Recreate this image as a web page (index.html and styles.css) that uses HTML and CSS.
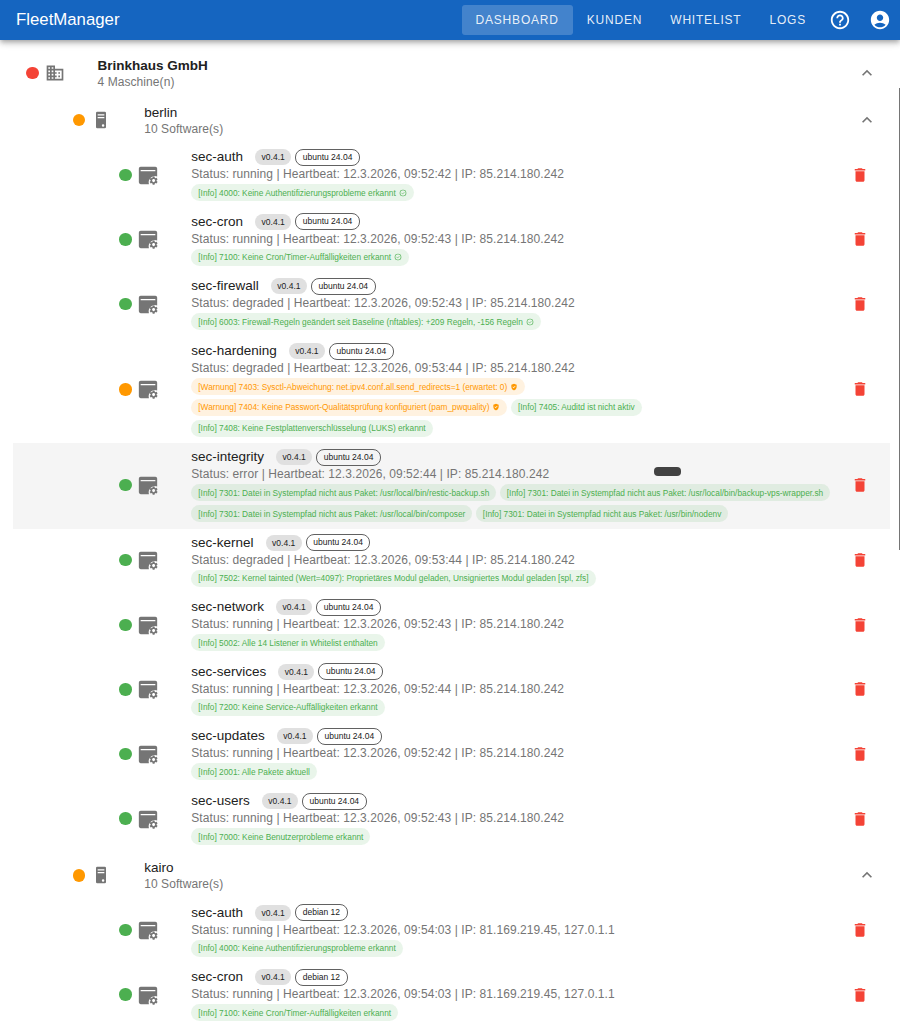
FILE: index.html
```html
<!DOCTYPE html>
<html lang="de">
<head>
  <meta charset="UTF-8" />
  <meta name="viewport" content="width=device-width, initial-scale=1" />
  <title>FleetManager</title>
  <link rel="stylesheet" href="styles.css">
</head>
<body>

  <svg class="icon-defs" aria-hidden="true">
    <symbol id="i-business" viewBox="0 0 24 24"><path d="M12 7V3H2v18h20V7H10zM6 19H4v-2h2v2zm0-4H4v-2h2v2zm0-4H4V9h2v2zm0-4H4V5h2v2zm4 12H8v-2h2v2zm0-4H8v-2h2v2zm0-4H8V9h2v2zm0-4H8V5h2v2zm10 12h-8v-2h2v-2h-2v-2h2v-2h-2V9h8v10zm-2-8h-2v2h2v-2zm0 4h-2v2h2v-2z"/></symbol>
    <symbol id="i-machine" viewBox="0 0 24 24"><path fill-rule="evenodd" d="M7.500 2h9A1.500 1.500 0 0 1 18 3.500v17a1.500 1.500 0 0 1-1.500 1.500h-9A1.500 1.500 0 0 1 6 20.500v-17A1.500 1.500 0 0 1 7.500 2zM8 5v1.500h8V5zm0 3.500V10h8V8.500zM14.500 17a1.500 1.500 0 1 0 0 3 1.500 1.500 0 0 0 0-3z"/></symbol>
    <symbol id="i-software" viewBox="0 0 24 24"><path fill-rule="evenodd" d="M4 3h16a2 2 0 0 1 2 2v8.500a7 7 0 0 0-9 8.500H4a2 2 0 0 1-2-2V5a2 2 0 0 1 2-2zm0 3.500V8h16V6.500z"/><path transform="translate(12.600 12.600) scale(.46)" d="M19.140 12.940c.04-.3.06-.61.06-.94 0-.32-.02-.64-.07-.94l2.030-1.580c.18-.14.23-.41.12-.61l-1.920-3.320c-.12-.22-.37-.29-.59-.22l-2.390.96c-.5-.38-1.030-.7-1.620-.94l-.36-2.540c-.04-.24-.24-.41-.48-.41h-3.840c-.24 0-.43.17-.47.41l-.36 2.540c-.59.24-1.130.57-1.620.94l-2.390-.96c-.22-.08-.47 0-.59.22L2.740 8.870c-.12.21-.08.47.12.61l2.030 1.580c-.05.3-.09.63-.09.94s.02.64.07.94l-2.030 1.580c-.18.14-.23.41-.12.61l1.920 3.320c.12.22.37.29.59.22l2.390-.96c.5.38 1.030.7 1.620.94l.36 2.540c.05.24.24.41.48.41h3.840c.24 0 .44-.17.47-.41l.36-2.540c.59-.24 1.130-.56 1.620-.94l2.390.96c.22.08.47 0 .59-.22l1.920-3.320c.12-.22.07-.47-.12-.61l-2.010-1.580zM12 15.600c-1.980 0-3.600-1.620-3.600-3.600s1.620-3.600 3.600-3.600 3.600 1.620 3.600 3.600-1.620 3.600-3.600 3.600z"/></symbol>
    <symbol id="i-delete" viewBox="0 0 24 24"><path d="M6 19c0 1.100.9 2 2 2h8c1.100 0 2-.9 2-2V7H6v12zM19 4h-3.500l-1-1h-5l-1 1H5v2h14V4z"/></symbol>
    <symbol id="i-less" viewBox="0 0 24 24"><path d="M12 8l-6 6 1.410 1.410L12 10.830l4.590 4.580L18 14z"/></symbol>
    <symbol id="i-help" viewBox="0 0 24 24"><path d="M11 18h2v-2h-2v2zm1-16C6.480 2 2 6.480 2 12s4.480 10 10 10 10-4.480 10-10S17.520 2 12 2zm0 18c-4.410 0-8-3.590-8-8s3.590-8 8-8 8 3.590 8 8-3.590 8-8 8zm0-14c-2.210 0-4 1.790-4 4h2c0-1.100.9-2 2-2s2 .9 2 2c0 2-3 1.750-3 5h2c0-2.250 3-2.500 3-5 0-2.210-1.790-4-4-4z"/></symbol>
    <symbol id="i-account" viewBox="0 0 24 24"><path d="M12 2C6.480 2 2 6.480 2 12s4.480 10 10 10 10-4.480 10-10S17.520 2 12 2zm0 4c1.930 0 3.500 1.570 3.500 3.500S13.930 13 12 13s-3.500-1.570-3.500-3.500S10.070 6 12 6zm0 14c-2.030 0-4.430-.82-6.140-2.880C7.550 15.800 9.680 15 12 15s4.450.8 6.140 2.120C16.430 19.180 14.030 20 12 20z"/></symbol>
    <symbol id="i-shield" viewBox="0 0 24 24"><path d="M12 2 4 5v6.090c0 5.050 3.410 9.760 8 10.910 4.590-1.150 8-5.860 8-10.910V5l-8-3zm-1.060 13.540L7.400 12l1.410-1.410 2.120 2.120 4.240-4.240 1.410 1.410-5.640 5.660z"/></symbol>
    <symbol id="i-ok" viewBox="0 0 24 24"><path d="M12 2a10 10 0 1 0 0 20 10 10 0 0 0 0-20zm0 18a8 8 0 1 1 0-16 8 8 0 0 1 0 16zm4-11-5 5-3-3-1 1 4 4 6-6z"/></symbol>
  </svg>

  <header class="appbar">
    <div class="brand">FleetManager</div>
    <nav class="nav">
      <a class="nav-link active">Dashboard</a>
      <a class="nav-link">Kunden</a>
      <a class="nav-link">Whitelist</a>
      <a class="nav-link">Logs</a>
    </nav>
    <svg class="nav-icon"><use href="#i-help"/></svg>
    <svg class="nav-icon"><use href="#i-account"/></svg>
  </header>

  <main class="content">

    <div class="row row-company">
      <span class="dot red"></span>
      <svg class="type-icon"><use href="#i-business"/></svg>
      <div class="row-text">
        <div class="company-name">Brinkhaus GmbH</div>
        <div class="row-sub">4 Maschine(n)</div>
      </div>
      <svg class="chevron"><use href="#i-less"/></svg>
    </div>

    <div class="row row-machine">
      <span class="dot orange"></span>
      <svg class="type-icon"><use href="#i-machine"/></svg>
      <div class="row-text">
        <div class="machine-name">berlin</div>
        <div class="row-sub">10 Software(s)</div>
      </div>
      <svg class="chevron"><use href="#i-less"/></svg>
    </div>

    <div class="row row-software">
      <span class="dot green"></span>
      <svg class="type-icon"><use href="#i-software"/></svg>
      <div class="row-text">
        <div class="title-line"><span class="sw-name">sec-auth</span><span class="tag">v0.4.1</span><span class="tag outlined">ubuntu 24.04</span></div>
        <div class="row-sub">Status: running | Heartbeat: 12.3.2026, 09:52:42 | IP: 85.214.180.242</div>
        <div class="chips"><span class="chip info">[Info] 4000: Keine Authentifizierungsprobleme erkannt <svg><use href="#i-ok"/></svg></span></div>
      </div>
      <svg class="delete"><use href="#i-delete"/></svg>
    </div>

    <div class="row row-software">
      <span class="dot green"></span>
      <svg class="type-icon"><use href="#i-software"/></svg>
      <div class="row-text">
        <div class="title-line"><span class="sw-name">sec-cron</span><span class="tag">v0.4.1</span><span class="tag outlined">ubuntu 24.04</span></div>
        <div class="row-sub">Status: running | Heartbeat: 12.3.2026, 09:52:43 | IP: 85.214.180.242</div>
        <div class="chips"><span class="chip info">[Info] 7100: Keine Cron/Timer-Auffälligkeiten erkannt <svg><use href="#i-ok"/></svg></span></div>
      </div>
      <svg class="delete"><use href="#i-delete"/></svg>
    </div>

    <div class="row row-software">
      <span class="dot green"></span>
      <svg class="type-icon"><use href="#i-software"/></svg>
      <div class="row-text">
        <div class="title-line"><span class="sw-name">sec-firewall</span><span class="tag">v0.4.1</span><span class="tag outlined">ubuntu 24.04</span></div>
        <div class="row-sub">Status: degraded | Heartbeat: 12.3.2026, 09:52:43 | IP: 85.214.180.242</div>
        <div class="chips"><span class="chip info">[Info] 6003: Firewall-Regeln geändert seit Baseline (nftables): +209 Regeln, -156 Regeln <svg><use href="#i-ok"/></svg></span></div>
      </div>
      <svg class="delete"><use href="#i-delete"/></svg>
    </div>

    <div class="row row-software">
      <span class="dot orange"></span>
      <svg class="type-icon"><use href="#i-software"/></svg>
      <div class="row-text">
        <div class="title-line"><span class="sw-name">sec-hardening</span><span class="tag">v0.4.1</span><span class="tag outlined">ubuntu 24.04</span></div>
        <div class="row-sub">Status: degraded | Heartbeat: 12.3.2026, 09:53:44 | IP: 85.214.180.242</div>
        <div class="chips">
          <span class="chip warn">[Warnung] 7403: Sysctl-Abweichung: net.ipv4.conf.all.send_redirects=1 (erwartet: 0) <svg><use href="#i-shield"/></svg></span>
          <span class="chip warn">[Warnung] 7404: Keine Passwort-Qualitätsprüfung konfiguriert (pam_pwquality) <svg><use href="#i-shield"/></svg></span>
          <span class="chip info">[Info] 7405: Auditd ist nicht aktiv</span>
          <span class="chip info">[Info] 7408: Keine Festplattenverschlüsselung (LUKS) erkannt</span>
        </div>
      </div>
      <svg class="delete"><use href="#i-delete"/></svg>
    </div>

    <div class="row row-software hovered">
      <span class="dot green"></span>
      <svg class="type-icon"><use href="#i-software"/></svg>
      <div class="row-text">
        <div class="title-line"><span class="sw-name">sec-integrity</span><span class="tag">v0.4.1</span><span class="tag outlined">ubuntu 24.04</span></div>
        <div class="row-sub">Status: error | Heartbeat: 12.3.2026, 09:52:44 | IP: 85.214.180.242</div>
        <div class="chips">
          <span class="chip info">[Info] 7301: Datei in Systempfad nicht aus Paket: /usr/local/bin/restic-backup.sh</span>
          <span class="chip info">[Info] 7301: Datei in Systempfad nicht aus Paket: /usr/local/bin/backup-vps-wrapper.sh</span>
          <span class="chip info">[Info] 7301: Datei in Systempfad nicht aus Paket: /usr/local/bin/composer</span>
          <span class="chip info">[Info] 7301: Datei in Systempfad nicht aus Paket: /usr/bin/nodenv</span>
        </div>
      </div>
      <svg class="delete"><use href="#i-delete"/></svg>
    </div>

    <div class="row row-software">
      <span class="dot green"></span>
      <svg class="type-icon"><use href="#i-software"/></svg>
      <div class="row-text">
        <div class="title-line"><span class="sw-name">sec-kernel</span><span class="tag">v0.4.1</span><span class="tag outlined">ubuntu 24.04</span></div>
        <div class="row-sub">Status: degraded | Heartbeat: 12.3.2026, 09:53:44 | IP: 85.214.180.242</div>
        <div class="chips"><span class="chip info">[Info] 7502: Kernel tainted (Wert=4097): Proprietäres Modul geladen, Unsigniertes Modul geladen [spl, zfs]</span></div>
      </div>
      <svg class="delete"><use href="#i-delete"/></svg>
    </div>

    <div class="row row-software">
      <span class="dot green"></span>
      <svg class="type-icon"><use href="#i-software"/></svg>
      <div class="row-text">
        <div class="title-line"><span class="sw-name">sec-network</span><span class="tag">v0.4.1</span><span class="tag outlined">ubuntu 24.04</span></div>
        <div class="row-sub">Status: running | Heartbeat: 12.3.2026, 09:52:43 | IP: 85.214.180.242</div>
        <div class="chips"><span class="chip info">[Info] 5002: Alle 14 Listener in Whitelist enthalten</span></div>
      </div>
      <svg class="delete"><use href="#i-delete"/></svg>
    </div>

    <div class="row row-software">
      <span class="dot green"></span>
      <svg class="type-icon"><use href="#i-software"/></svg>
      <div class="row-text">
        <div class="title-line"><span class="sw-name">sec-services</span><span class="tag">v0.4.1</span><span class="tag outlined">ubuntu 24.04</span></div>
        <div class="row-sub">Status: running | Heartbeat: 12.3.2026, 09:52:44 | IP: 85.214.180.242</div>
        <div class="chips"><span class="chip info">[Info] 7200: Keine Service-Auffälligkeiten erkannt</span></div>
      </div>
      <svg class="delete"><use href="#i-delete"/></svg>
    </div>

    <div class="row row-software">
      <span class="dot green"></span>
      <svg class="type-icon"><use href="#i-software"/></svg>
      <div class="row-text">
        <div class="title-line"><span class="sw-name">sec-updates</span><span class="tag">v0.4.1</span><span class="tag outlined">ubuntu 24.04</span></div>
        <div class="row-sub">Status: running | Heartbeat: 12.3.2026, 09:52:42 | IP: 85.214.180.242</div>
        <div class="chips"><span class="chip info">[Info] 2001: Alle Pakete aktuell</span></div>
      </div>
      <svg class="delete"><use href="#i-delete"/></svg>
    </div>

    <div class="row row-software">
      <span class="dot green"></span>
      <svg class="type-icon"><use href="#i-software"/></svg>
      <div class="row-text">
        <div class="title-line"><span class="sw-name">sec-users</span><span class="tag">v0.4.1</span><span class="tag outlined">ubuntu 24.04</span></div>
        <div class="row-sub">Status: running | Heartbeat: 12.3.2026, 09:52:43 | IP: 85.214.180.242</div>
        <div class="chips"><span class="chip info">[Info] 7000: Keine Benutzerprobleme erkannt</span></div>
      </div>
      <svg class="delete"><use href="#i-delete"/></svg>
    </div>

    <div class="row row-machine">
      <span class="dot orange"></span>
      <svg class="type-icon"><use href="#i-machine"/></svg>
      <div class="row-text">
        <div class="machine-name">kairo</div>
        <div class="row-sub">10 Software(s)</div>
      </div>
      <svg class="chevron"><use href="#i-less"/></svg>
    </div>

    <div class="row row-software">
      <span class="dot green"></span>
      <svg class="type-icon"><use href="#i-software"/></svg>
      <div class="row-text">
        <div class="title-line"><span class="sw-name">sec-auth</span><span class="tag">v0.4.1</span><span class="tag outlined">debian 12</span></div>
        <div class="row-sub">Status: running | Heartbeat: 12.3.2026, 09:54:03 | IP: 81.169.219.45, 127.0.1.1</div>
        <div class="chips"><span class="chip info">[Info] 4000: Keine Authentifizierungsprobleme erkannt</span></div>
      </div>
      <svg class="delete"><use href="#i-delete"/></svg>
    </div>

    <div class="row row-software">
      <span class="dot green"></span>
      <svg class="type-icon"><use href="#i-software"/></svg>
      <div class="row-text">
        <div class="title-line"><span class="sw-name">sec-cron</span><span class="tag">v0.4.1</span><span class="tag outlined">debian 12</span></div>
        <div class="row-sub">Status: running | Heartbeat: 12.3.2026, 09:54:03 | IP: 81.169.219.45, 127.0.1.1</div>
        <div class="chips"><span class="chip info">[Info] 7100: Keine Cron/Timer-Auffälligkeiten erkannt</span></div>
      </div>
      <svg class="delete"><use href="#i-delete"/></svg>
    </div>

  </main>

  <div class="scroll-line"></div>
  <div class="cursor-blot"></div>

</body>
</html>
```

FILE: styles.css
```css
:root {
  --color-primary: #1565c0;
  --color-text: #212121;
  --color-muted: #757575;
  --color-red: #f44336;
  --color-orange: #ff9800;
  --color-green: #4caf50;
}

html,
body {
  height: 100%;
  overflow: hidden;
}

body {
  margin: 0;
  font-family: "Liberation Sans", Arial, sans-serif;
  background: #fff;
  color: var(--color-text);
}

.icon-defs {
  display: none;
}

.appbar {
  height: 40px;
  display: flex;
  align-items: center;
  padding: 0 0 0 16px;
  background: var(--color-primary);
  color: #fff;
  box-shadow: 0 2px 4px -1px rgba(0, 0, 0, 0.2), 0 4px 5px 0 rgba(0, 0, 0, 0.14), 0 1px 10px 0 rgba(0, 0, 0, 0.12);
}

.brand {
  flex: 1;
  font-size: 16.800px;
}

.nav {
  display: flex;
}

.nav-link {
  padding: 8px 14px;
  font-size: 12px;
  line-height: 14px;
  letter-spacing: 0.8px;
  text-transform: uppercase;
  border-radius: 3px;
  color: rgba(255, 255, 255, 0.9);
}

.nav-link.active {
  background: rgba(255, 255, 255, 0.2);
}

.nav-icon {
  width: 22px;
  height: 22px;
  margin: 0 9px;
  fill: #fff;
}

.content {
  padding: 9.500px 10px 0 13px;
}

.row {
  display: flex;
  align-items: center;
  box-sizing: border-box;
}

.row-company {
  padding: 0 13px 0 13px;
  height: 47px;
}

.row-machine {
  padding: 0 13px 0 59.700px;
  height: 47px;
}

.row-software {
  padding: 4.800px 21px 6.800px 106.300px;
}

.row.hovered {
  background: #f5f5f5;
}

.dot {
  width: 12.500px;
  height: 12.500px;
  border-radius: 50%;
  flex-shrink: 0;
}

.dot.red { background: var(--color-red); }
.dot.orange { background: var(--color-orange); }
.dot.green { background: var(--color-green); }

.type-icon {
  width: 20px;
  height: 20px;
  margin-left: 6px;
  flex-shrink: 0;
  fill: var(--color-muted);
}

.row-software .type-icon {
  width: 22px;
  height: 22px;
  margin-left: 5.500px;
}

.row-text {
  flex: 1;
  min-width: 0;
  margin-left: 33px;
}

.row-software .row-text {
  margin: 0 12px 0 32px;
}

.company-name {
  font-size: 13.500px;
  line-height: 19px;
  font-weight: 700;
  padding-top: 1px;
  margin-bottom: -1px;
}

.machine-name,
.sw-name {
  font-size: 13.500px;
  line-height: 18px;
}

.machine-name {
  padding-top: 1px;
  margin-bottom: -1px;
}

.row-sub {
  font-size: 12px;
  line-height: 17px;
  color: var(--color-muted);
  letter-spacing: 0.07px;
}

.title-line {
  display: flex;
  align-items: center;
  gap: 4px;
  height: 18px;
}

.sw-name {
  margin-right: 8px;
}

.tag {
  height: 16px;
  padding: 0 6.500px;
  font-size: 8.500px;
  line-height: 16px;
  border-radius: 8px;
  background: #e0e0e0;
}

.tag.outlined {
  height: 15px;
  line-height: 15px;
  border: 1px solid #616161;
  background: transparent;
}

.chips {
  display: flex;
  flex-wrap: wrap;
  gap: 3.800px 3.500px;
  margin-top: 1px;
}

.chip {
  display: inline-flex;
  align-items: center;
  gap: 3px;
  height: 17px;
  padding: 0 7px;
  font-size: 8.300px;
  border-radius: 9px;
  white-space: nowrap;
}

.chip svg {
  width: 8px;
  height: 8px;
  fill: currentColor;
}

.chip.info {
  background: rgba(76, 175, 80, 0.12);
  color: var(--color-green);
}

.chip.warn {
  background: rgba(255, 152, 0, 0.12);
  color: var(--color-orange);
}

.delete {
  width: 18px;
  height: 18px;
  flex-shrink: 0;
  fill: var(--color-red);
}

.chevron {
  width: 20px;
  height: 20px;
  flex-shrink: 0;
  fill: var(--color-muted);
}

.scroll-line {
  position: absolute;
  top: 88px;
  right: 0;
  width: 1px;
  height: 462px;
  background: #757575;
}

.cursor-blot {
  position: absolute;
  left: 654px;
  top: 467px;
  width: 27px;
  height: 9px;
  border-radius: 4px;
  background: #424242;
}
```
